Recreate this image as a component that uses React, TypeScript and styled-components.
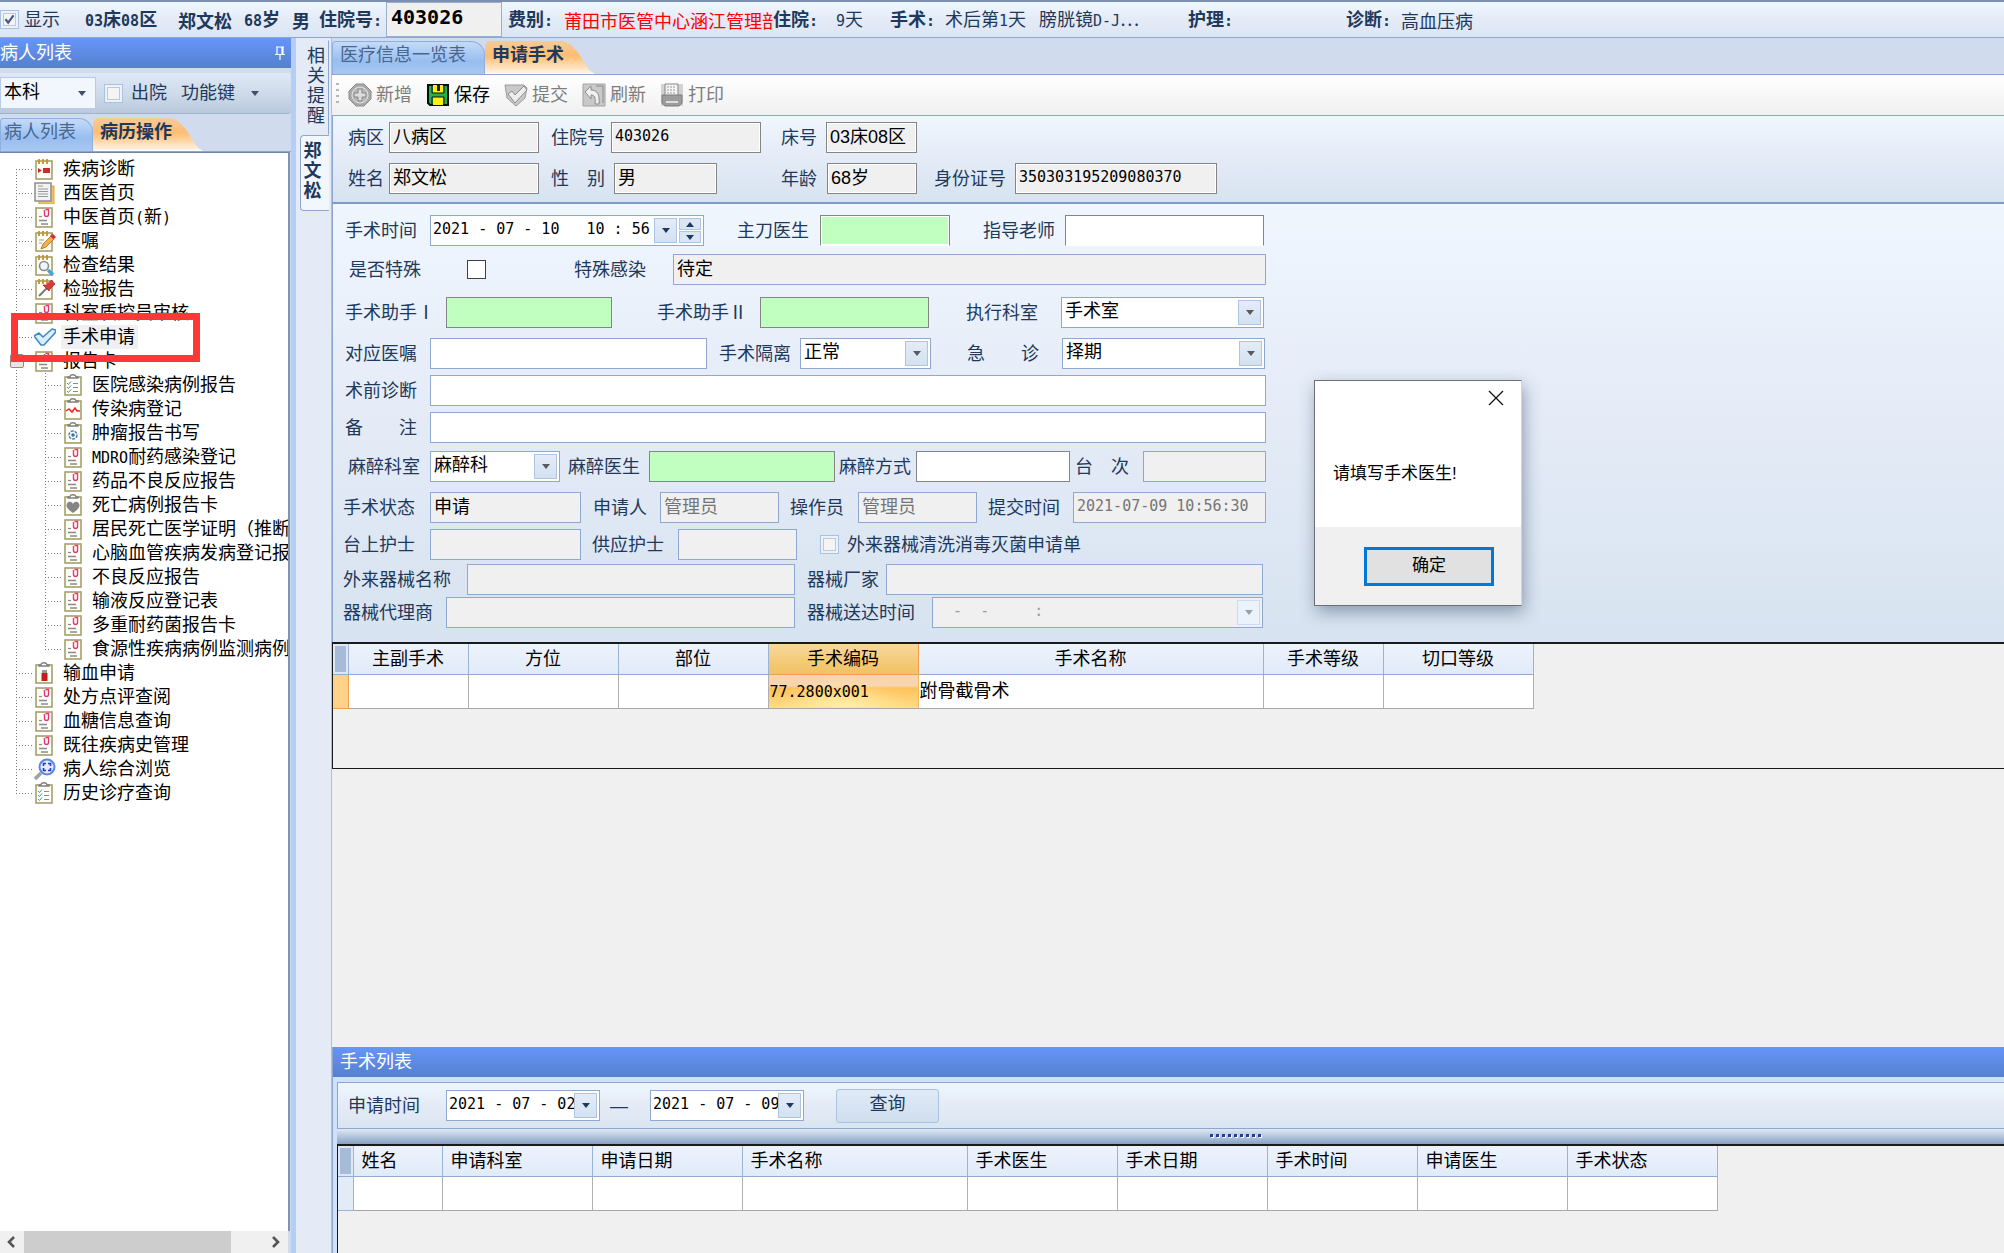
import React from "react";
import styled, { createGlobalStyle, css } from "styled-components";

const INK = "#1e395b";
const EDGE = "#8ba7cf";
const CJK = '"Liberation Sans", "Noto Sans CJK SC", sans-serif';
const MONO = '"DejaVu Sans Mono", "Noto Sans CJK SC", monospace';

const Global = createGlobalStyle`
  * { box-sizing: border-box; }
  body { margin: 0; background: #f0f0f0; overflow: hidden; }
  body, button, input, select { font: 18px/24px ${CJK}; color: ${INK}; }
  button, input, select { margin: 0; padding: 0; border: 0; background: none; border-radius: 0; outline: none; }
  ul { list-style: none; margin: 0; padding: 0; }
`;

/* ---------- text ---------- */

const Half = styled.span`
  font-family: ${MONO};
  font-size: 15px;
`;

/* Latin letters and digits take half the width of a Chinese character. */
const T = ({ children }: { children: string }) => (
  <>
    {children.split(/([\x20-\x7e]+)/).map((s, i) => (i % 2 ? <Half key={i}>{s}</Half> : s))}
  </>
);

/* ---------- frame ---------- */

const App_ = styled.div`
  position: relative;
  display: flex;
  flex-direction: column;
  height: 100vh;
  white-space: nowrap;
`;

const PatientBar = styled.header`
  display: grid;
  grid-template-columns: 24px 61px 93px 66px 48px 27px 67px 116px 6px 56px 209px 63px 54px 55px 94px 149px 158px 55px 1fr;
  align-items: center;
  height: 38px;
  flex: none;
  border-top: 2px solid #7d8fae;
  border-bottom: 1px solid ${EDGE};
  background: linear-gradient(#eff7fe, #e4ebf7 50%, #dbe6f2);
`;

const BarText = styled.span<{ $bold?: boolean; $red?: boolean }>`
  overflow: hidden;
  font-family: "Noto Sans CJK SC", sans-serif;
  font-weight: ${(p) => (p.$bold ? 700 : 400)};
  color: ${(p) => (p.$red ? "#ff0000" : INK)};
`;

const BarNumber = styled.input`
  align-self: stretch;
  width: 116px;
  padding: 0 4px 5px;
  border: 1px solid #9ab0d0;
  background: #f0f0f0;
  color: #000;
  font: 700 20px/24px ${MONO};
`;

const Body = styled.div`
  display: flex;
  flex: 1;
  min-height: 0;
`;

const Tick = styled.input<{ $plain?: boolean }>`
  appearance: none;
  flex: none;
  width: 19px;
  height: 19px;
  border: 1px solid ${(p) => (p.$plain ? "#404040" : "#a9c1e2")};
  background: ${(p) => (p.$plain ? "#fff" : "#f4f4f4")};
  box-shadow: ${(p) => (p.$plain ? "none" : "inset 0 0 0 2px #eaf2fc, inset 0 0 0 3px #c4c8ce")};
  &:checked {
    background: #f4f4f4
      url("data:image/svg+xml,%3Csvg xmlns='http://www.w3.org/2000/svg' viewBox='0 0 19 19'%3E%3Cpath d='M5 9l3 4 6-8' fill='none' stroke='%233c5a86' stroke-width='2.4'/%3E%3C/svg%3E");
  }
`;

/* ---------- left panel ---------- */

const Side = styled.aside`
  display: flex;
  flex-direction: column;
  width: 296px;
  flex: none;
  border-right: 5px solid #b5cef5;
  background: #d0dced;
`;

const PanelTitle = styled.div<{ $inset?: boolean }>`
  display: flex;
  align-items: center;
  justify-content: space-between;
  height: 30px;
  flex: none;
  padding: 0 5px 0 ${(p) => (p.$inset ? 7 : 0)}px;
  background: linear-gradient(#6695fb, #5580cd);
  color: #fff;
`;

const SideTools = styled.div`
  display: flex;
  align-items: center;
  gap: 8px;
  height: 41px;
  flex: none;
  margin: 5px 0 1px;
  background: linear-gradient(#dfe9f6, #cfdbea 50%, #b9c9dc);
  border-bottom: 1px solid #9fb3cf;
  border-radius: 0 4px 4px 0;
`;

const FlatButton = styled.button`
  display: flex;
  align-items: center;
  gap: 16px;
  margin-left: 6px;
`;

const TickLabel = styled.label`
  display: flex;
  align-items: center;
  gap: 8px;
`;

const Tabs = styled.div`
  display: flex;
  height: 37px;
  flex: none;
  padding-top: 3px;
  border-bottom: 1px solid ${EDGE};
  background: #d0dced;
`;

const Tab = styled.button<{ $active?: boolean; $w: number; $pad?: number }>`
  width: ${(p) => p.$w}px;
  flex: none;
  text-align: left;
  padding: 0 0 6px ${(p) => p.$pad ?? 7}px;
  ${(p) =>
    p.$active
      ? css`
          font-weight: 700;
          background: linear-gradient(#f3cb9b, #ffbd70 45%, #fff1df 95%, #fff);
          clip-path: polygon(0 4px, 3px 0, calc(100% - 32px) 0, calc(100% - 25px) 3px, calc(100% - 18px) 10px, calc(100% - 6px) 29px, 100% 100%, 0 100%);
        `
      : css`
          color: #48678f;
          border: 1px solid #8fb0de;
          border-bottom: 0;
          border-radius: 4px 14px 0 0;
          background: linear-gradient(#c4dbf8, #98bdf0 60%, #a9c8f2);
        `}
`;

const TreeBox = styled.nav`
  flex: 1;
  min-height: 0;
  overflow: hidden;
  margin-right: 1px;
  padding-top: 4px;
  border-top: 1px solid #6f86a8;
  border-right: 2px solid #7f93b2;
  background: #fff;
  color: #000;
`;

const TreeRow = styled.div`
  display: flex;
  align-items: center;
  height: 24px;
`;

const Guide = styled.span<{ $w: number; $part: "all" | "first" | "last" | "line" | "none" }>`
  align-self: stretch;
  width: ${(p) => p.$w}px;
  flex: none;
  background-repeat: no-repeat;
  background-image: repeating-linear-gradient(to bottom, #777 0 1px, transparent 1px 3px),
    repeating-linear-gradient(to right, #777 0 1px, transparent 1px 3px);
  background-position: 16px ${(p) => (p.$part === "first" ? "12px" : "0")}, 16px 12px;
  background-size: 1px ${(p) => (p.$part === "first" || p.$part === "last" ? "12px" : p.$part === "none" ? "0" : "100%")},
    ${(p) => (p.$part === "line" || p.$part === "none" ? "0 0" : "16px 1px")};
`;

const Expander = styled.button`
  width: 14px;
  height: 14px;
  margin: 5px 0 0 10px;
  display: block;
  border: 1px solid #8c8c8c;
  border-radius: 2px;
  background: linear-gradient(#555, #555) center / 6px 1px no-repeat, #e6e6e6;
`;

const TreeText = styled.span<{ $on?: boolean }>`
  margin-left: 5px;
  padding: 0 3px 0 2px;
  background: ${(p) => (p.$on ? "#f0f0f0" : "none")};
`;

const RedMark = styled.div`
  position: absolute;
  left: 11px;
  top: 313px;
  width: 189px;
  height: 49px;
  border: 7px solid #ff3737;
  pointer-events: none;
`;

const Scroll = styled.div`
  display: flex;
  align-items: center;
  height: 22px;
  flex: none;
  margin-right: 3px;
  background: #f0f0f0;
  svg { flex: none; margin: 0 4px; }
`;

const Thumb = styled.div`
  align-self: stretch;
  width: 207px;
  background: #cdcdcd;
`;

const Grow = styled.div`
  flex: 1;
`;

/* ---------- vertical tabs ---------- */

const VStrip = styled.div`
  width: 36px;
  flex: none;
  padding: 2px 3px 0 4px;
  background: #e4ebf6;
  border-right: 1px solid #a9c1de;
`;

const VTab = styled.button<{ $active?: boolean }>`
  display: block;
  width: 29px;
  padding: ${(p) => (p.$active ? "5px 7px 9px 2px" : "5px 5px 8px 6px")};
  line-height: 20px;
  white-space: normal;
  font-weight: ${(p) => (p.$active ? 700 : 400)};
  border: 1px solid ${(p) => (p.$active ? EDGE : "transparent")};
  border-right: ${(p) => (p.$active ? "0" : `1px solid ${EDGE}`)};
  border-radius: 4px 0 0 4px;
  background: ${(p) => (p.$active ? "#f2f7fd" : "none")};
`;

/* ---------- main ---------- */

const Main = styled.main`
  display: flex;
  flex-direction: column;
  flex: 1;
  min-width: 0;
  background: #f0f0f0;
`;

const Tools = styled.div`
  display: flex;
  align-items: center;
  gap: 14px;
  height: 41px;
  flex: none;
  padding-left: 4px;
  border-bottom: 1px solid ${EDGE};
  background: linear-gradient(#fff, #f0f0f0);
`;

const Grip = styled.span`
  width: 3px;
  height: 24px;
  margin-right: -5px;
  background: repeating-linear-gradient(#b5b5b5 0 2px, transparent 2px 6px);
`;

const Tool = styled.button`
  display: flex;
  align-items: center;
  gap: 4px;
  color: #000;
  &:disabled { color: #7d7d7d; }
`;

const Pane = styled.section<{ $patient?: boolean }>`
  flex: none;
  border-left: 1px solid ${EDGE};
  ${(p) =>
    p.$patient
      ? css`
          padding: 6px 0 8px;
          border-bottom: 2px solid #7f9ac2;
        `
      : css`
          padding: 11px 0 14px;
        `}
  background: linear-gradient(#eff6fe, #e4ebf7 50%, #d7e3f0);
`;

const Row = styled.div<{ $top?: number }>`
  display: flex;
  align-items: center;
  height: 31px;
  margin-top: ${(p) => p.$top || 0}px;
`;

const FieldBox = styled.div<{ $lead: number }>`
  display: flex;
  align-items: center;
  flex: none;
  margin-left: ${(p) => p.$lead}px;
`;

const FieldLabel = styled.label<{ $w: number }>`
  width: ${(p) => p.$w}px;
  flex: none;
`;

type Tone = "white" | "gray" | "sunken" | "green" | "dim";

const Box = styled.input<{ $w: number; $tone: Tone; $mono?: boolean; $open?: boolean; $dark?: boolean }>`
  width: ${(p) => p.$w}px;
  height: 31px;
  padding: 0 0 ${(p) => (p.$mono ? 3 : 5)}px 3px;
  color: #000;
  border: 1px solid ${(p) => (p.$dark || p.$tone === "sunken" || p.$tone === "green" ? "#858585" : "#8fa9ce")};
  background: ${(p) => (p.$tone === "white" ? "#fff" : p.$tone === "green" ? "#c0ffc0" : "#f0f0f0")};
  ${(p) => p.$tone === "sunken" && "box-shadow: inset 0 0 0 1px #fff;"}
  ${(p) => p.$tone === "dim" && "color: #757575;"}
  ${(p) => p.$mono && `font-family: ${MONO}; font-size: 15px;`}
  ${(p) => p.$open && "border-color: #858585; border-bottom-color: #fff; box-shadow: inset 0 0 0 1px #fff;"}
`;

const Combo = styled.span<{ $w: number; $tone?: Tone; $bare?: boolean }>`
  display: grid;
  grid-template-columns: 1fr auto auto;
  align-items: center;
  width: ${(p) => p.$w}px;
  height: ${(p) => (p.$bare ? 32 : 31)}px;
  border: 1px solid ${(p) => (p.$bare ? "#b9cbe4" : "#8fa9ce")};
  background: ${(p) => (p.$bare ? "#f2f7fd" : p.$tone === "gray" ? "#f0f0f0" : "#fff")};
  select, input {
    appearance: none;
    grid-column: 1 / -1;
    grid-row: 1;
    width: 100%;
    height: 100%;
    padding: 0 0 3px 3px;
    color: #000;
    opacity: 1;
  }
  input { padding-left: 2px; font-family: ${MONO}; font-size: 15px; }
  input:disabled { color: #9a9a9a; }
`;

const Arrow = styled.span<{ $bare?: boolean; $dim?: boolean }>`
  display: grid;
  place-items: center;
  grid-row: 1;
  grid-column: 2;
  width: 23px;
  height: 25px;
  margin-right: 2px;
  pointer-events: none;
  border: ${(p) => (p.$bare ? "0" : `1px solid ${p.$dim ? "#c9dcf2" : "#afc4e2"}`)};
  background: ${(p) => (p.$bare ? "none" : p.$dim ? "#eaf3fc" : "linear-gradient(#e4ecf7, #d3e1f1)")};
`;

const Spinner = styled.span`
  grid-row: 1;
  grid-column: 3;
  display: grid;
  gap: 1px;
  margin-right: 2px;
  button {
    display: grid;
    place-items: center;
    width: 22px;
    height: 12px;
    border: 1px solid #afc4e2;
    background: #dbe6f4;
  }
`;

const Tri = ({ up, color = "#3f4f66" }: { up?: boolean; color?: string }) => (
  <svg width="8" height="5" viewBox="0 0 8 5" aria-hidden="true">
    <path d={up ? "M0 5L4 0L8 5Z" : "M0 0L4 5L8 0Z"} fill={color} />
  </svg>
);

/* ---------- tables ---------- */

const GridArea = styled.div<{ $main?: boolean }>`
  flex: none;
  height: ${(p) => (p.$main ? 127 : 109)}px;
  overflow: hidden;
  border: solid #1a1a1a;
  border-width: ${(p) => (p.$main ? "2px 0 1px 1px" : "2px 0 0 1px")};
  background: #f0f0f0;
`;

const Table = styled.table<{ $center?: boolean }>`
  table-layout: fixed;
  border-collapse: collapse;
  width: 0;
  color: #000;
  th, td { padding: 0 ${(p) => (p.$center ? 1 : 8)}px; font-weight: 400; text-align: ${(p) => (p.$center ? "center" : "left")}; }
  th { height: 30px; border-right: 1px solid #9ab4d8; border-bottom: 1px solid #8fabd2; background: linear-gradient(#edf3fc, #e0eaf8); }
  td { height: 34px; text-align: left; border-right: 1px solid #b0b0b0; border-bottom: 1px solid #a8a8a8; background: #fff; }
  th:first-child { box-shadow: inset 0 0 0 2px #dfe7f2; background: #a5bbd8; }
`;

const Handle = styled.td<{ $on?: boolean }>`
  && {
    border-color: ${(p) => (p.$on ? "#f0a04c" : "#9ab4d8")};
    background: ${(p) => (p.$on ? "#ffd28a" : "#e3ebf7")};
  }
`;

const HotHead = styled.th`
  && { background: linear-gradient(#f8d79b, #f1c161); border-color: #f0a04c; }
`;

const HotCell = styled.td`
  && {
    border-right-color: #f5b860;
    background: radial-gradient(ellipse at 50% 120%, #fff3ae, transparent 65%), linear-gradient(#f8d5ae 0 35%, #ffc25c 40%, #ffdb85);
  }
`;

/* ---------- bottom panel ---------- */

const Query = styled.form`
  display: flex;
  align-items: center;
  height: 47px;
  flex: none;
  margin: 5px 0 0 4px;
  padding-left: 10px;
  border: 1px solid ${EDGE};
  border-right: 0;
  background: linear-gradient(#eef6fd, #e4ebf6 50%, #dae5f1);
`;

const Bottom = styled.section`
  flex: none;
  border-left: 1px solid ${EDGE};
  background: #cfe0fa;
`;

const Dash = styled.span`
  width: 50px;
  padding-right: 12px;
  text-align: center;
`;

const QueryButton = styled.button`
  width: 103px;
  height: 34px;
  margin-left: 32px;
  padding-bottom: 3px;
  border: 1px solid #adc2df;
  border-radius: 3px;
  background: linear-gradient(#e0eaf6, #cfdeef);
`;

const Splitter = styled.div`
  display: flex;
  justify-content: center;
  gap: 3px;
  height: 15px;
  margin-left: 4px;
  padding: 5px 0 0 130px;
  background: linear-gradient(#dfe8f4, #88a2c4);
  i { width: 3px; height: 3px; background: #1f3f86; box-shadow: 1px 1px 0 #fff; }
`;

const BottomGrid = styled.div`
  margin-left: 4px;
`;

/* ---------- dialog ---------- */

const Dialog = styled.div`
  position: absolute;
  left: 1314px;
  top: 380px;
  width: 208px;
  height: 226px;
  display: flex;
  flex-direction: column;
  border: 1px solid #6b6f76;
  border-right-color: #d0d5dc;
  background: #fff;
  box-shadow: 2px 6px 16px rgba(40, 60, 90, 0.45);
  color: #000;
  font-size: 17px;
`;

const Close = styled.button`
  align-self: flex-end;
  width: 50px;
  height: 38px;
`;

const Message = styled.p`
  flex: 1;
  margin: 0;
  padding: 43px 0 0 18px;
`;

const DialogFoot = styled.div`
  display: flex;
  justify-content: center;
  align-items: center;
  height: 78px;
  padding-left: 22px;
  background: #f0f0f0;
`;

const Ok = styled.button`
  width: 130px;
  height: 39px;
  border: 3px solid #0078d7;
  background: #e1e1e1;
  color: #000;
  font-size: 17px;
`;

/* ---------- icons ---------- */

type IconName =
  | "clip" | "diag" | "pages" | "pencil" | "search" | "pen" | "check"
  | "list" | "wave" | "target" | "heart" | "blood" | "zoom";

const IconSvg = styled.svg`
  flex: none;
`;

const NodeIcon = ({ name }: { name: IconName }) => {
  const page = <rect x="2" y="3" width="16" height="18" fill="#fffef8" stroke="#a3a16a" strokeWidth="1.6" />;
  const rings = <path d="M5 1v5M9 1v5M13 1v5" stroke="#c8922a" strokeWidth="1.8" />;
  const board = (
    <>
      {page}
      <path d="M5 4h10V3h-2c0-3-6-3-6 0H5z" fill="#fff" stroke="#808080" strokeWidth="1.3" />
    </>
  );
  const art: Record<IconName, React.ReactNode> = {
    clip: (
      <>
        <rect x="2" y="2" width="16" height="19" fill="#fffef8" stroke="#a3a16a" strokeWidth="1.6" />
        <path d="M5 10.500h3" stroke="#8a8a8a" strokeWidth="1.2" />
        <path d="M5 14.500h8M7 18h7" stroke="#8a8a8a" strokeWidth="1.4" />
        <path d="M10.500 4v4.500c0 2.500 4 2.500 4 0V3.500h-3" fill="none" stroke="#e83572" strokeWidth="1.4" />
      </>
    ),
    diag: (
      <>
        {page}
        {rings}
        <path d="M4 10l4 2.500-4 2.500zM9 10h7v5H9z" fill="#cf2a2a" />
      </>
    ),
    pages: (
      <>
        <path d="M4 4h16v18H5z" fill="#f0c36a" stroke="#d9a640" />
        <rect x="1" y="1" width="16" height="18" fill="#f2f2f2" stroke="#8d8d8d" strokeWidth="1.5" />
        <path d="M4 4h5M4 7h10M4 9.500h10M4 12h10M4 14.500h10" stroke="#999" />
      </>
    ),
    pencil: (
      <>
        {page}
        {rings}
        <path d="M5 10h5M5 13h3" stroke="#999" />
        <path d="M7 19l2-5 8-8 3 3-8 8z" fill="#f3b04b" stroke="#9a6a20" strokeWidth=".8" />
        <path d="M16 6l2.500-2.500L22 7l-2.500 2.500z" fill="#d8332c" />
      </>
    ),
    search: (
      <>
        {page}
        {rings}
        <circle cx="10" cy="12" r="4.500" fill="#eef6ff" stroke="#8b8b8b" strokeWidth="1.6" />
        <path d="M14 16l5 5" stroke="#4aa3df" strokeWidth="3.400" />
      </>
    ),
    pen: (
      <>
        {page}
        {rings}
        <path d="M5 18l8-8" stroke="#777" strokeWidth="2" />
        <path d="M9 7l6 6 1-2 5-5-3.500-4-5 5z" fill="#dd3a3a" stroke="#9d2020" strokeWidth=".7" />
      </>
    ),
    check: <path d="M0 10l5-3 4 4L18 3l4 1-1 3L10 19H7z" fill="#dceefa" stroke="#3b8cc4" strokeWidth="1.6" strokeLinejoin="round" />,
    list: (
      <>
        {board}
        <path d="M4 9l1.500 1.500L8 7.500M4 13l1.500 1.500L8 11.500M4 17l1.500 1.500L8 15.500" fill="none" stroke="#3c9c97" />
        <path d="M10 9.500h5M10 13.500h5M10 17.500h5" stroke="#8a8a8a" strokeWidth="1.200" />
      </>
    ),
    wave: (
      <>
        {board}
        <path d="M3 13l3-2 3 3 3-4 2 3h3" fill="none" stroke="#ee2222" strokeWidth="1.500" />
      </>
    ),
    target: (
      <>
        {board}
        <circle cx="10" cy="13" r="4" fill="none" stroke="#4a80b8" strokeWidth="1.500" strokeDasharray="3 1" />
        <circle cx="10" cy="13" r="1.800" fill="#3a6ea8" />
      </>
    ),
    heart: (
      <>
        {board}
        <path d="M10 19C3 14 3 12 4 9.500c1.500-2.500 5-2 6 .5 1-2.500 4.500-3 6-.5 1 2.500 1 4.500-6 9.500z" fill="#858585" />
      </>
    ),
    blood: (
      <>
        {board}
        <path d="M8 8h5v3H8z" fill="#999" />
        <path d="M7.500 11h6v8h-6z" fill="#c41f1f" />
      </>
    ),
    zoom: (
      <>
        <path d="M1 21l6-6" stroke="#a0a0a0" strokeWidth="3.600" />
        <circle cx="13" cy="9" r="7.500" fill="#e4ebff" stroke="#5a86e0" strokeWidth="2" />
        <path d="M9.500 8V5.500H12M14 5.500h2.500V8M16.500 10v2.500H14M12 12.500H9.500V10" fill="none" stroke="#2337c8" strokeWidth="1.600" />
      </>
    ),
  };
  return (
    <IconSvg width="22" height="22" viewBox="0 0 22 22" aria-hidden="true">
      {art[name]}
    </IconSvg>
  );
};

const ToolIcon = ({ name }: { name: "add" | "save" | "submit" | "refresh" | "print" }) => {
  const art = {
    add: (
      <>
        <path d="M8 1h8l7 7v8l-7 7H8l-7-7V8z" fill="#a9a9a9" stroke="#8a8a8a" />
        <circle cx="12" cy="12" r="8" fill="#b8b8b8" stroke="#e4e4e4" />
        <path d="M10 6h4v4h4v4h-4v4h-4v-4H6v-4h4z" fill="#dcdcdc" stroke="#868686" />
      </>
    ),
    save: (
      <>
        <path d="M2 2h20v20H4l-2-2z" fill="#22b14c" stroke="#0a0a0a" strokeWidth="2" />
        <path d="M7 2h10v8H7z" fill="#ffee10" />
        <path d="M11 2h3v6h-3z" fill="#222" />
        <path d="M7 14h10v8H7z" fill="#ffee10" />
        <path d="M6 2v8h12V2M6 22v-8h12v8" fill="none" stroke="#111" />
      </>
    ),
    submit: (
      <>
        <path d="M1 2h19l3 3-2 10-9 8-9-8z" fill="#c9c9c9" stroke="#9a9a9a" />
        <path d="M4 11l4-3 3 4 9-9 3 4-12 13z" fill="#ededed" stroke="#8a8a8a" />
      </>
    ),
    refresh: (
      <>
        <path d="M1 1h22v22H1z" fill="#c9c9c9" stroke="#a2a2a2" />
        <path d="M3 9l6-6v4c6 0 9 4 8 14h-4c1-7-1-9-4-9v4z" fill="#f0f0f0" stroke="#8a8a8a" />
        <path d="M14 3h7v17" fill="none" stroke="#8a8a8a" />
      </>
    ),
    print: (
      <>
        <path d="M1 1h22v22H1z" fill="#d2d2d2" />
        <path d="M5 1h13v12H5z" fill="#f4f4f4" stroke="#858585" />
        <path d="M7 4h9M7 7h9M7 10h9" stroke="#9a9a9a" strokeDasharray="2 1" />
        <path d="M2 12h20v8l-3 3H5l-3-3z" fill="#9c9c9c" stroke="#7c7c7c" />
        <path d="M6 19h12" stroke="#dedede" strokeWidth="2" />
      </>
    ),
  };
  return (
    <svg width="24" height="24" viewBox="0 0 24 24" aria-hidden="true">
      {art[name]}
    </svg>
  );
};

/* ---------- form parts ---------- */

type FieldProps = {
  id: string;
  label: string;
  lead: number;
  lw: number;
  w: number;
  tone?: Tone;
  value?: string;
  mono?: boolean;
  open?: boolean;
  dark?: boolean;
};

const Field = ({ id, label, lead, lw, w, tone = "white", value = "", mono, open, dark }: FieldProps) => (
  <FieldBox $lead={lead}>
    <FieldLabel $w={lw} htmlFor={id}>{label}</FieldLabel>
    <Box
      id={id}
      $w={w}
      $tone={tone}
      $mono={mono}
      $open={open}
      $dark={dark}
      defaultValue={value}
      readOnly={tone === "gray" || tone === "sunken"}
      disabled={tone === "dim"}
    />
  </FieldBox>
);

const Choice = ({ id, label, lead, lw, w, value = "" }: FieldProps) => (
  <FieldBox $lead={lead}>
    <FieldLabel $w={lw} htmlFor={id}>{label}</FieldLabel>
    <Combo $w={w}>
      <select id={id} defaultValue={value}>
        <option>{value}</option>
      </select>
      <Arrow><Tri color="#5a5a5a" /></Arrow>
    </Combo>
  </FieldBox>
);

/* ---------- data ---------- */

type Node = { text: string; icon: IconName; kids?: Node[] };

const n = (text: string, icon: IconName = "clip", kids?: Node[]): Node => ({ text, icon, kids });

const TREE: Node[] = [
  n("疾病诊断", "diag"),
  n("西医首页", "pages"),
  n("中医首页(新)"),
  n("医嘱", "pencil"),
  n("检查结果", "search"),
  n("检验报告", "pen"),
  n("科室质控员审核"),
  n("手术申请", "check"),
  n("报告卡", "clip", [
    n("医院感染病例报告", "list"),
    n("传染病登记", "wave"),
    n("肿瘤报告书写", "target"),
    n("MDRO耐药感染登记"),
    n("药品不良反应报告"),
    n("死亡病例报告卡", "heart"),
    n("居民死亡医学证明（推断"),
    n("心脑血管疾病发病登记报"),
    n("不良反应报告"),
    n("输液反应登记表"),
    n("多重耐药菌报告卡"),
    n("食源性疾病病例监测病例"),
  ]),
  n("输血申请", "blood"),
  n("处方点评查阅"),
  n("血糖信息查询"),
  n("既往疾病史管理"),
  n("病人综合浏览", "zoom"),
  n("历史诊疗查询", "list"),
];

const OPS: [string, number][] = [
  ["主副手术", 120], ["方位", 150], ["部位", 150], ["手术编码", 150],
  ["手术名称", 345], ["手术等级", 120], ["切口等级", 150],
];

const LIST: [string, number][] = [
  ["姓名", 89], ["申请科室", 150], ["申请日期", 150], ["手术名称", 225], ["手术医生", 150],
  ["手术日期", 150], ["手术时间", 150], ["申请医生", 150], ["手术状态", 150],
];

export default function App() {
  return (
    <App_>
      <Global />
      <PatientBar>
        <Tick type="checkbox" id="show" defaultChecked />
        <label htmlFor="show">显示</label>
        <BarText $bold><T>03床08区</T></BarText>
        <BarText $bold>郑文松</BarText>
        <BarText $bold><T>68岁</T></BarText>
        <BarText $bold>男</BarText>
        <BarText $bold as="label" htmlFor="adm"><T>住院号:</T></BarText>
        <BarNumber id="adm" readOnly value="403026" />
        <span />
        <BarText $bold><T>费别:</T></BarText>
        <BarText $red>莆田市医管中心涵江管理部</BarText>
        <BarText $bold><T>住院:</T></BarText>
        <BarText><T>9天</T></BarText>
        <BarText $bold><T>手术:</T></BarText>
        <BarText><T>术后第1天</T></BarText>
        <BarText><T>膀胱镜D-J…</T></BarText>
        <BarText $bold><T>护理:</T></BarText>
        <BarText $bold><T>诊断:</T></BarText>
        <BarText>高血压病</BarText>
      </PatientBar>

      <Body>
        <Side>
          <PanelTitle>
            病人列表
            <svg width="12" height="14" viewBox="0 0 12 14" aria-hidden="true">
              <path d="M2 1h8M3 1v7M8 1v7M9 1v7M1 8.500h10M6 9v5" fill="none" stroke="#fff" strokeWidth="1.2" />
            </svg>
          </PanelTitle>
          <SideTools>
            <Combo $w={96} $bare>
              <select aria-label="科室" defaultValue="本科"><option>本科</option></select>
              <Arrow $bare><Tri /></Arrow>
            </Combo>
            <TickLabel><Tick type="checkbox" />出院</TickLabel>
            <FlatButton>功能键<Tri /></FlatButton>
          </SideTools>
          <Tabs>
            <Tab $w={93} $pad={3}>病人列表</Tab>
            <Tab $w={110} $active>病历操作</Tab>
          </Tabs>
          <TreeBox>
            <ul>
              {TREE.map((node, i) => (
                <li key={node.text}>
                  <TreeRow>
                    <Guide $w={34} $part={i === 0 ? "first" : i === TREE.length - 1 ? "last" : "all"}>
                      {node.kids && <Expander aria-label="折叠" />}
                    </Guide>
                    <NodeIcon name={node.icon} />
                    <TreeText $on={node.icon === "check"}><T>{node.text}</T></TreeText>
                  </TreeRow>
                  {node.kids && (
                    <ul>
                      {node.kids.map((kid, k) => (
                        <TreeRow as="li" key={kid.text}>
                          <Guide $w={29} $part="line" />
                          <Guide $w={34} $part={k === node.kids!.length - 1 ? "last" : "all"} />
                          <NodeIcon name={kid.icon} />
                          <TreeText><T>{kid.text}</T></TreeText>
                        </TreeRow>
                      ))}
                    </ul>
                  )}
                </li>
              ))}
            </ul>
          </TreeBox>
          <Scroll>
            <svg width="16" height="12" viewBox="0 0 16 12" aria-hidden="true">
              <path d="M10 1L5 6l5 5" fill="none" stroke="#555" strokeWidth="2.600" />
            </svg>
            <Thumb />
            <Grow />
            <svg width="16" height="12" viewBox="0 0 16 12" aria-hidden="true">
              <path d="M5 1l5 5-5 5" fill="none" stroke="#555" strokeWidth="2.600" />
            </svg>
          </Scroll>
        </Side>

        <VStrip>
          <VTab>相关提醒</VTab>
          <VTab $active>郑文松</VTab>
        </VStrip>

        <Main>
          <Tabs>
            <Tab $w={153}>医疗信息一览表</Tab>
            <Tab $w={110} $active>申请手术</Tab>
          </Tabs>
          <Tools>
            <Grip />
            <Tool disabled><ToolIcon name="add" />新增</Tool>
            <Tool><ToolIcon name="save" />保存</Tool>
            <Tool disabled><ToolIcon name="submit" />提交</Tool>
            <Tool disabled><ToolIcon name="refresh" />刷新</Tool>
            <Tool disabled><ToolIcon name="print" />打印</Tool>
          </Tools>

          <Pane $patient>
            <Row>
              <Field id="ward" label="病区" lead={15} lw={41} w={150} tone="sunken" value="八病区" />
              <Field id="no" label="住院号" lead={12} lw={60} w={150} tone="sunken" value="403026" mono />
              <Field id="bed" label="床号" lead={20} lw={45} w={91} tone="sunken" value="03床08区" />
            </Row>
            <Row $top={10}>
              <Field id="name" label="姓名" lead={15} lw={41} w={150} tone="sunken" value="郑文松" />
              <Field id="sex" label="性　别" lead={12} lw={63} w={103} tone="sunken" value="男" />
              <Field id="age" label="年龄" lead={64} lw={46} w={90} tone="sunken" value="68岁" />
              <Field id="idno" label="身份证号" lead={17} lw={81} w={202} tone="sunken" value="350303195209080370" mono />
            </Row>
          </Pane>

          <Pane>
            <Row>
              <FieldBox $lead={12}>
                <FieldLabel $w={85} htmlFor="optime">手术时间</FieldLabel>
                <Combo $w={274}>
                  <input id="optime" defaultValue="2021 - 07 - 10   10 : 56" />
                  <Arrow><Tri color={INK} /></Arrow>
                  <Spinner>
                    <button aria-label="增加"><Tri up color={INK} /></button>
                    <button aria-label="减少"><Tri color={INK} /></button>
                  </Spinner>
                </Combo>
              </FieldBox>
              <Field id="surgeon" label="主刀医生" lead={33} lw={83} w={130} tone="green" open />
              <Field id="mentor" label="指导老师" lead={33} lw={82} w={199} open />
            </Row>
            <Row $top={8}>
              <FieldBox $lead={16}>
                <FieldLabel $w={118} htmlFor="special">是否特殊</FieldLabel>
                <Tick type="checkbox" id="special" $plain />
              </FieldBox>
              <Field id="infect" label="特殊感染" lead={88} lw={99} w={593} tone="gray" value="待定" />
            </Row>
            <Row $top={12}>
              <Field id="as1" label="手术助手Ⅰ" lead={12} lw={101} w={166} tone="green" />
              <Field id="as2" label="手术助手Ⅱ" lead={45} lw={103} w={169} tone="green" />
              <Choice id="dept" label="执行科室" lead={37} lw={95} w={203} value="手术室" />
            </Row>
            <Row $top={10}>
              <Field id="order" label="对应医嘱" lead={12} lw={85} w={277} />
              <Choice id="iso" label="手术隔离" lead={12} lw={81} w={131} value="正常" />
              <Choice id="urgent" label="急　　诊" lead={36} lw={95} w={203} value="择期" />
            </Row>
            <Row $top={6}>
              <Field id="prediag" label="术前诊断" lead={12} lw={85} w={836} />
            </Row>
            <Row $top={6}>
              <Field id="note" label="备　　注" lead={12} lw={85} w={836} />
            </Row>
            <Row $top={8}>
              <Choice id="anesdept" label="麻醉科室" lead={15} lw={82} w={130} value="麻醉科" />
              <Field id="anesdoc" label="麻醉医生" lead={8} lw={81} w={186} tone="green" />
              <Field id="anesway" label="麻醉方式" lead={4} lw={77} w={154} dark />
              <Field id="turn" label="台　次" lead={5} lw={68} w={123} tone="gray" />
            </Row>
            <Row $top={10}>
              <Field id="state" label="手术状态" lead={10} lw={87} w={151} tone="gray" value="申请" />
              <Field id="applicant" label="申请人" lead={12} lw={67} w={119} tone="dim" value="管理员" />
              <Field id="operator" label="操作员" lead={11} lw={68} w={119} tone="dim" value="管理员" />
              <Field id="submitted" label="提交时间" lead={11} lw={85} w={193} tone="dim" value="2021-07-09 10:56:30" mono />
            </Row>
            <Row $top={6}>
              <Field id="nurse" label="台上护士" lead={10} lw={87} w={151} tone="gray" />
              <Field id="nurse2" label="供应护士" lead={11} lw={86} w={119} tone="gray" />
              <FieldBox $lead={23}>
                <TickLabel><Tick type="checkbox" disabled />外来器械清洗消毒灭菌申请单</TickLabel>
              </FieldBox>
            </Row>
            <Row $top={4}>
              <Field id="tool" label="外来器械名称" lead={10} lw={124} w={328} tone="gray" />
              <Field id="maker" label="器械厂家" lead={12} lw={79} w={377} tone="gray" />
            </Row>
            <Row $top={2}>
              <Field id="agent" label="器械代理商" lead={10} lw={103} w={349} tone="gray" />
              <FieldBox $lead={12}>
                <FieldLabel $w={125} htmlFor="arrive">器械送达时间</FieldLabel>
                <Combo $w={331} $tone="gray">
                  <input id="arrive" disabled defaultValue="  -  -     :" />
                  <Arrow $dim><Tri color="#a0a0a0" /></Arrow>
                </Combo>
              </FieldBox>
            </Row>
          </Pane>

          <GridArea $main>
            <Table $center>
              <colgroup>
                <col width={15} />
                {OPS.map(([h, w]) => <col key={h} width={w} />)}
              </colgroup>
              <thead>
                <tr>
                  <th />
                  {OPS.map(([h]) => (h === "手术编码" ? <HotHead key={h}>{h}</HotHead> : <th key={h}>{h}</th>))}
                </tr>
              </thead>
              <tbody>
                <tr>
                  <Handle $on />
                  <td /><td /><td />
                  <HotCell><T>77.2800x001</T></HotCell>
                  <td>跗骨截骨术</td>
                  <td /><td />
                </tr>
              </tbody>
            </Table>
          </GridArea>

          <Grow />

          <Bottom>
            <PanelTitle $inset>手术列表</PanelTitle>
            <Query onSubmit={(e) => e.preventDefault()}>
              <FieldLabel $w={98} htmlFor="from">申请时间</FieldLabel>
              <Combo $w={154}>
                <input id="from" defaultValue="2021 - 07 - 02" />
                <Arrow><Tri color={INK} /></Arrow>
              </Combo>
              <Dash>—</Dash>
              <Combo $w={154}>
                <input aria-label="截止时间" defaultValue="2021 - 07 - 09" />
                <Arrow><Tri color={INK} /></Arrow>
              </Combo>
              <QueryButton>查询</QueryButton>
            </Query>
            <Splitter>{Array.from({ length: 9 }, (_, i) => <i key={i} />)}</Splitter>
            <BottomGrid>
              <GridArea>
                <Table>
                  <colgroup>
                    <col width={15} />
                    {LIST.map(([h, w]) => <col key={h} width={w} />)}
                  </colgroup>
                  <thead>
                    <tr>
                      <th />
                      {LIST.map(([h]) => <th key={h}>{h}</th>)}
                    </tr>
                  </thead>
                  <tbody>
                    <tr>
                      <Handle />
                      {LIST.map(([h]) => <td key={h} />)}
                    </tr>
                  </tbody>
                </Table>
              </GridArea>
            </BottomGrid>
          </Bottom>
        </Main>
      </Body>

      <RedMark />

      <Dialog role="dialog" aria-label="提示">
        <Close aria-label="关闭">
          <svg width="16" height="16" viewBox="0 0 16 16" aria-hidden="true">
            <path d="M1 1l14 14M15 1L1 15" stroke="#111" strokeWidth="1.300" />
          </svg>
        </Close>
        <Message>请填写手术医生!</Message>
        <DialogFoot><Ok>确定</Ok></DialogFoot>
      </Dialog>
    </App_>
  );
}
